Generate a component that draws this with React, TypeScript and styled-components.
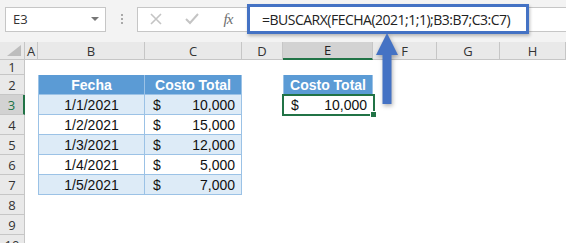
import React from "react";
import styled, { createGlobalStyle } from "styled-components";

const GlobalStyle = createGlobalStyle`
  html, body { margin: 0; padding: 0; background: #ffffff; }
  body { font-family: "Liberation Sans", Arial, sans-serif; overflow: hidden; }
`;

const COLS = [25, 13, 107, 97, 41, 90, 64, 63, 66];
const LETTERS = ["A", "B", "C", "D", "E", "F", "G", "H"];
const GREEN = "#217346";
const BLUE = "#4472c4";

const rows = [
  { date: "1/1/2021", cost: "10,000" },
  { date: "1/2/2021", cost: "15,000" },
  { date: "1/3/2021", cost: "12,000" },
  { date: "1/4/2021", cost: "5,000" },
  { date: "1/5/2021", cost: "7,000" },
];

const Page = styled.div`
  position: relative;
  width: 566px;
  height: 243px;
  overflow: hidden;
  background: #ffffff;
`;

const Toolbar = styled.div`
  display: flex;
  align-items: center;
  height: 42px;
  padding: 0 0 4px 5px;
  box-sizing: border-box;
  background: #f3f3f3;
`;

const NameBox = styled.div`
  display: flex;
  align-items: center;
  justify-content: space-between;
  width: 101px;
  height: 25px;
  box-sizing: border-box;
  padding: 0 6px 0 7px;
  background: #ffffff;
  border: 1px solid #c6c6c6;
  font-family: "Open Sans", sans-serif;
  font-size: 13px;
  color: #333;
`;

const Caret = styled.span`
  width: 0;
  height: 0;
  border-left: 4px solid transparent;
  border-right: 4px solid transparent;
  border-top: 4px solid #777;
`;

const Dots = styled.div`
  display: flex;
  flex-direction: column;
  gap: 2px;
  width: 31px;
  align-items: center;
  span {
    width: 2px;
    height: 2px;
    background: #a9a9a9;
  }
`;

const FormulaBar = styled.div`
  flex: 1;
  display: flex;
  align-items: center;
  height: 25px;
  background: #ffffff;
  border: 1px solid #c6c6c6;
  border-right: none;
  box-sizing: border-box;
`;

const IconButton = styled.div<{ $w: number }>`
  width: ${(p) => p.$w}px;
  height: 23px;
  display: flex;
  align-items: center;
  justify-content: center;
  color: #c8c8c8;
`;

const Fx = styled.span`
  font-family: "Liberation Serif", serif;
  font-style: italic;
  font-size: 15px;
  color: #6e6e6e;
  letter-spacing: -1px;
`;

const FormulaText = styled.div`
  height: 30px;
  width: 282px;
  margin-left: 1px;
  box-sizing: border-box;
  border: 3px solid ${BLUE};
  box-shadow: 1px 2px 3px rgba(0, 0, 0, 0.25);
  display: flex;
  align-items: center;
  padding-left: 12px;
  font-family: "Open Sans", sans-serif;
  font-size: 14px;
  letter-spacing: -0.5px;
  color: #222;
  background: #ffffff;
  white-space: nowrap;
`;

const Sheet = styled.div`
  display: grid;
  grid-template-columns: ${COLS.map((c) => c + "px").join(" ")};
  grid-template-rows: 18px 15px repeat(9, 20px);
`;

const Corner = styled.div`
  background: #e9e9e9;
  border-right: 1px solid #c6c6c6;
  border-bottom: 1px solid #c6c6c6;
  position: relative;
  &::after {
    content: "";
    position: absolute;
    right: 3px;
    bottom: 3px;
    border-left: 14px solid transparent;
    border-bottom: 11px solid #bdbdbd;
  }
`;

const ColHead = styled.div<{ $sel?: boolean }>`
  background: ${(p) => (p.$sel ? "#d2d2d2" : "#e9e9e9")};
  border-right: 1px solid #c6c6c6;
  border-bottom: ${(p) => (p.$sel ? `2px solid ${GREEN}` : "1px solid #c6c6c6")};
  display: flex;
  align-items: center;
  justify-content: center;
  font-family: "Open Sans", sans-serif;
  font-size: 13px;
  color: ${(p) => (p.$sel ? "#222" : "#333")};
`;

const RowHead = styled.div<{ $sel?: boolean }>`
  background: ${(p) => (p.$sel ? "#d2d2d2" : "#e9e9e9")};
  border-right: ${(p) => (p.$sel ? `2px solid ${GREEN}` : "1px solid #c6c6c6")};
  border-bottom: 1px solid #c6c6c6;
  display: flex;
  align-items: center;
  justify-content: center;
  font-family: "Open Sans", sans-serif;
  font-size: 13px;
  color: ${(p) => (p.$sel ? GREEN : "#333")};
`;

const Cell = styled.div`
  background: #ffffff;
`;

const HeadCell = styled.div<{ $first?: boolean }>`
  background: #5b9bd5;
  color: #ffffff;
  font-weight: bold;
  font-size: 14px;
  display: flex;
  align-items: center;
  justify-content: center;
  border-right: 1px solid #9bc2e6;
  border-bottom: 1px solid #9bc2e6;
  border-left: ${(p) => (p.$first ? "1px solid #9bc2e6" : "none")};
`;

const DataCell = styled.div<{ $band: boolean; $first?: boolean }>`
  background: ${(p) => (p.$band ? "#ddebf7" : "#ffffff")};
  border-bottom: 1px solid #9bc2e6;
  border-right: 1px solid #9bc2e6;
  border-left: ${(p) => (p.$first ? "1px solid #9bc2e6" : "none")};
  display: flex;
  align-items: center;
  justify-content: center;
  font-size: 14px;
  color: #111;
`;

const Money = styled(DataCell)<{ $selected?: boolean }>`
  justify-content: space-between;
  padding: 0 6px 0 8px;
  position: relative;
  ${(p) =>
    p.$selected &&
    `
    border: none;
    &::after {
      content: "";
      position: absolute;
      inset: -1px -2px -1px -1px;
      border: 2px solid ${GREEN};
    }
    &::before {
      content: "";
      position: absolute;
      right: -4px;
      bottom: -3px;
      width: 5px;
      height: 5px;
      background: ${GREEN};
      border: 1px solid #fff;
      z-index: 2;
    }
  `}
`;

const Arrow = styled.svg`
  position: absolute;
  left: 374px;
  top: 32px;
  filter: drop-shadow(1px 2px 2px rgba(0, 0, 0, 0.3));
`;

export default function App() {
  const bodyRows = Array.from({ length: 9 }, (_, i) => i + 2);
  return (
    <Page>
      <GlobalStyle />
      <Toolbar>
        <NameBox>
          E3
          <Caret />
        </NameBox>
        <Dots>
          <span />
          <span />
          <span />
        </Dots>
        <FormulaBar>
          <IconButton $w={36}>
            <svg width="12" height="12" viewBox="0 0 12 12">
              <path d="M1 1 L11 11 M11 1 L1 11" stroke="#c4c4c4" strokeWidth="1.6" />
            </svg>
          </IconButton>
          <IconButton $w={36}>
            <svg width="14" height="12" viewBox="0 0 14 12">
              <path d="M1 6 L5 10 L13 1" stroke="#c4c4c4" strokeWidth="2" fill="none" />
            </svg>
          </IconButton>
          <IconButton $w={36}>
            <Fx>fx</Fx>
          </IconButton>
          <FormulaText>=BUSCARX(FECHA(2021;1;1);B3:B7;C3:C7)</FormulaText>
        </FormulaBar>
      </Toolbar>
      <Sheet>
        <Corner />
        {LETTERS.map((l) => (
          <ColHead key={l} $sel={l === "E"}>
            {l}
          </ColHead>
        ))}
        <RowHead>1</RowHead>
        {LETTERS.map((l) => (
          <Cell key={"r1" + l} />
        ))}
        {bodyRows.map((r) => {
          const data = rows[r - 3];
          return (
            <React.Fragment key={r}>
              <RowHead $sel={r === 3}>{r}</RowHead>
              <Cell />
              {r === 2 && (
                <>
                  <HeadCell $first>Fecha</HeadCell>
                  <HeadCell>Costo Total</HeadCell>
                  <Cell />
                  <HeadCell $first>Costo Total</HeadCell>
                </>
              )}
              {data && (
                <>
                  <DataCell $band={r % 2 === 1} $first>
                    {data.date}
                  </DataCell>
                  <Money $band={r % 2 === 1}>
                    <span>$</span>
                    <span>{data.cost}</span>
                  </Money>
                  <Cell />
                  {r === 3 ? (
                    <Money $band={false} $selected>
                      <span>$</span>
                      <span>10,000</span>
                    </Money>
                  ) : (
                    <Cell />
                  )}
                </>
              )}
              {!data && r !== 2 && (
                <>
                  <Cell />
                  <Cell />
                  <Cell />
                  <Cell />
                </>
              )}
              <Cell />
              <Cell />
              <Cell />
            </React.Fragment>
          );
        })}
      </Sheet>
      <Arrow width="26" height="72" viewBox="0 0 26 72">
        <path d="M13 1 L24 23 L17.5 23 L17.5 72 L8.5 72 L8.5 23 L2 23 Z" fill={BLUE} />
      </Arrow>
    </Page>
  );
}
